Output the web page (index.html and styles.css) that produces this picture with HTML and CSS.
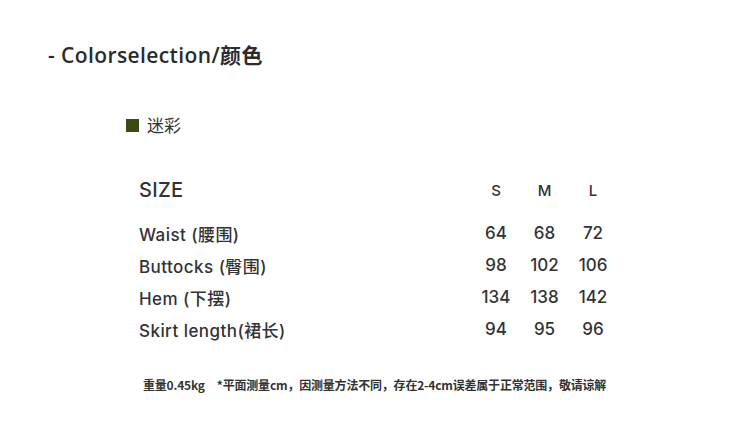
FILE: index.html
```html
<!DOCTYPE html>
<html lang="zh">
<head>
<meta charset="utf-8">
<link rel="stylesheet" href="styles.css">
</head>
<body>
<div class="page">
  <h1 class="title">- Colorselection/颜色</h1>
  <div class="color">
    <span class="swatch"></span>
    <span class="color-name">迷彩</span>
  </div>
  <div class="table">
    <div class="row head">
      <div class="label size">SIZE</div>
      <div class="val">S</div>
      <div class="val">M</div>
      <div class="val">L</div>
    </div>
    <div class="row">
      <div class="label">Waist (腰围)</div>
      <div class="val">64</div>
      <div class="val">68</div>
      <div class="val">72</div>
    </div>
    <div class="row">
      <div class="label">Buttocks (臀围)</div>
      <div class="val">98</div>
      <div class="val">102</div>
      <div class="val">106</div>
    </div>
    <div class="row">
      <div class="label">Hem (下摆)</div>
      <div class="val">134</div>
      <div class="val">138</div>
      <div class="val">142</div>
    </div>
    <div class="row">
      <div class="label">Skirt length(裙长)</div>
      <div class="val">94</div>
      <div class="val">95</div>
      <div class="val">96</div>
    </div>
  </div>
  <p class="note"><span class="weight">重量0.45kg</span>*平面测量cm，因测量方法不同，存在2-4cm误差属于正常范围，敬请谅解</p>
</div>
</body>
</html>
```
FILE: styles.css
```css
html, body {
  margin: 0;
  padding: 0;
  background: #ffffff;
}
body {
  width: 750px;
  height: 422px;
  overflow: hidden;
  font-family: "Inter", "Noto Sans CJK SC", sans-serif;
  color: #333333;
}
.page {
  padding: 40px 0 0 48px;
}
.title {
  margin: 0;
  font-size: 21px;
  font-weight: 600;
  line-height: 30px;
  color: #2b2b2b;
  letter-spacing: 0.4px;
  font-family: "Open Sans", "Noto Sans CJK SC", sans-serif;
}
.color {
  display: flex;
  align-items: center;
  gap: 8px;
  margin: 45px 0 0 78px;
  height: 20px;
}
.swatch {
  width: 13px;
  height: 13px;
  background: #3c4b14;
}
.color-name {
  font-size: 17px;
  line-height: 20px;
  color: #333;
  font-family: "Noto Sans CJK SC", sans-serif;
}
.table {
  margin: 35px 0 0 91px;
  width: 480px;
}
.row {
  display: grid;
  grid-template-columns: 333px 48px 49px 48px;
  height: 32px;
  align-items: center;
  font-size: 17px;
  font-weight: 500;
}
.row.head {
  height: 40px;
  margin-bottom: 7px;
}
.label {
  white-space: nowrap;
  letter-spacing: 0.45px;
}
.size {
  font-size: 20px;
  letter-spacing: 0.3px;
}
.head .val {
  font-size: 15px;
}
.val {
  text-align: center;
}
.note {
  margin: 31px 0 0 95px;
  font-size: 12px;
  font-weight: 700;
  color: #333;
  white-space: nowrap;
  letter-spacing: -0.2px;
  font-family: "Noto Sans CJK SC", sans-serif;
}
.weight {
  margin-right: 12px;
}
```
